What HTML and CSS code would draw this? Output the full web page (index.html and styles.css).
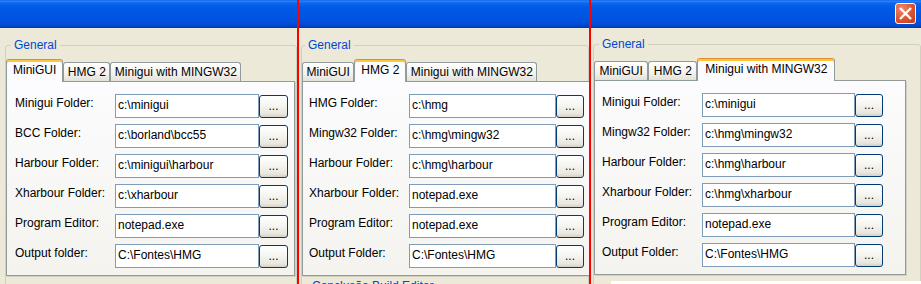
FILE: index.html
```html
<!DOCTYPE html>
<html lang="en">
<head>
    <meta charset="UTF-8">
    <title>Paths</title>
    <link rel="stylesheet" href="styles.css">
</head>
<body>
    <div class="shot">
        <div class="win win-a">
            <div class="titlebar"></div>
            <fieldset class="group">
                <legend>General</legend>
                <div class="tabs">
                    <span class="tab active">MiniGUI</span>
                    <span class="tab">HMG 2</span>
                    <span class="tab">Minigui with MINGW32</span>
                </div>
                <div class="page">
                    <div class="row"><span class="label">Minigui Folder:</span><span class="field">c:\minigui</span><span class="btn">...</span></div>
                    <div class="row"><span class="label">BCC Folder:</span><span class="field">c:\borland\bcc55</span><span class="btn">...</span></div>
                    <div class="row"><span class="label">Harbour Folder:</span><span class="field">c:\minigui\harbour</span><span class="btn">...</span></div>
                    <div class="row"><span class="label">Xharbour Folder:</span><span class="field">c:\xharbour</span><span class="btn">...</span></div>
                    <div class="row"><span class="label">Program Editor:</span><span class="field">notepad.exe</span><span class="btn">...</span></div>
                    <div class="row"><span class="label">Output folder:</span><span class="field">C:\Fontes\HMG</span><span class="btn">...</span></div>
                </div>
            </fieldset>
        </div>
        <div class="cut"></div>
        <div class="win win-b">
            <div class="titlebar"></div>
            <fieldset class="group">
                <legend>General</legend>
                <div class="tabs">
                    <span class="tab">MiniGUI</span>
                    <span class="tab active">HMG 2</span>
                    <span class="tab">Minigui with MINGW32</span>
                </div>
                <div class="page">
                    <div class="row"><span class="label">HMG Folder:</span><span class="field">c:\hmg</span><span class="btn">...</span></div>
                    <div class="row"><span class="label">Mingw32 Folder:</span><span class="field">c:\hmg\mingw32</span><span class="btn">...</span></div>
                    <div class="row"><span class="label">Harbour Folder:</span><span class="field">c:\hmg\harbour</span><span class="btn">...</span></div>
                    <div class="row"><span class="label">Xharbour Folder:</span><span class="field">notepad.exe</span><span class="btn">...</span></div>
                    <div class="row"><span class="label">Program Editor:</span><span class="field">notepad.exe</span><span class="btn">...</span></div>
                    <div class="row"><span class="label">Output Folder:</span><span class="field">C:\Fontes\HMG</span><span class="btn">...</span></div>
                </div>
                <div class="next">Conclusão Build Editor</div>
            </fieldset>
        </div>
        <div class="cut"></div>
        <div class="win win-c">
            <div class="titlebar">
                <span class="close">
                    <svg width="19" height="19" viewBox="0 0 19 19"><path d="M4 4L15 15M15 4L4 15" stroke="#fff" stroke-width="2.4" fill="none"/></svg>
                </span>
            </div>
            <fieldset class="group">
                <legend>General</legend>
                <div class="tabs">
                    <span class="tab">MiniGUI</span>
                    <span class="tab">HMG 2</span>
                    <span class="tab active">Minigui with MINGW32</span>
                </div>
                <div class="page">
                    <div class="row"><span class="label">Minigui Folder:</span><span class="field">c:\minigui</span><span class="btn">...</span></div>
                    <div class="row"><span class="label">Mingw32 Folder:</span><span class="field">c:\hmg\mingw32</span><span class="btn">...</span></div>
                    <div class="row"><span class="label">Harbour Folder:</span><span class="field">c:\hmg\harbour</span><span class="btn">...</span></div>
                    <div class="row"><span class="label">Xharbour Folder:</span><span class="field">c:\hmg\xharbour</span><span class="btn">...</span></div>
                    <div class="row"><span class="label">Program Editor:</span><span class="field">notepad.exe</span><span class="btn">...</span></div>
                    <div class="row"><span class="label">Output Folder:</span><span class="field">C:\Fontes\HMG</span><span class="btn">...</span></div>
                </div>
                <div class="blank"></div>
            </fieldset>
        </div>
    </div>
</body>
</html>
```

FILE: styles.css
```css
*{
    box-sizing: border-box;
}
body{
    margin: 0;
    background: #ece9d8;
    font: 12px/14px "Liberation Sans", Arial, sans-serif;
    color: #000;
}
.shot{
    display: flex;
    width: 921px;
    height: 284px;
    overflow: hidden;
}
.win{
    flex: none;
    height: 284px;
    overflow: hidden;
}
.win-a{ width: 297px; }
.win-b{ width: 290px; }
.win-c{ width: 330px; }
.cut{
    flex: none;
    width: 2px;
    background: #ff0000;
}

/* xp title bar */
.titlebar{
    height: 28px;
    display: flex;
    justify-content: flex-end;
    align-items: flex-start;
    padding: 3px 5px 0 0;
    background: linear-gradient(#0a5ee6 0, #2f86f6 1px, #0d66ee 3px, #0059e8 8px, #0055e3 17px, #004ed9 24px, #003fbe 27px, #00339c 28px);
}
.close{
    width: 21px;
    height: 21px;
    border: 1px solid #fff;
    border-radius: 3px;
    background: radial-gradient(circle at 30% 25%, #ee8a6c, #db5230 55%, #c23c17);
}
.close svg{ display: block; }

/* group box */
.group{
    margin: 10px 0 0 5px;
    padding: 7px 1px 30px 0;
    min-width: 0;
    border: 1px solid #d0d0bf;
    border-radius: 3px;
}
.group legend{
    margin-left: 5px;
    padding: 0 3px;
    color: #0046d5;
    line-height: 14px;
}
.win-b .group{ margin-left: 2px; }
.win-b .group legend{ margin-left: 3px; }
.win-c .group{ margin: 9px 0 0 2px; }

/* tabs */
.tabs{
    display: flex;
    align-items: flex-end;
    height: 22px;
}
.tab{
    flex: none;
    height: 19px;
    padding: 2px 3.5px 0;
    border: 1px solid #919b9c;
    border-bottom: 0;
    border-radius: 3px 3px 0 0;
    background: linear-gradient(#fff, #f4f3ef 55%, #e3e1d8);
    white-space: nowrap;
}
.tab.active{
    position: relative;
    z-index: 1;
    height: 23px;
    margin-bottom: -1px;
    padding: 3px 6px 0;
    border-top-color: #e68b2c;
    background: #fcfcfe;
    box-shadow: inset 0 2px 0 #ffc83c;
}
.win-c .tab{ padding-left: 4.5px; padding-right: 4.5px; }
.win-c .tab.active{ padding-left: 7px; padding-right: 7px; }

/* tab page */
.page{
    width: 289px;
    padding: 12px 0 7px 8px;
    border: 1px solid #919b9c;
    background: linear-gradient(#fcfcfe, #f4f3ee);
    box-shadow: 1px 1px 0 #d2d0c4;
}
.win-b .page{ width: 300px; padding-left: 6px; }
.win-c .page{ width: 312px; padding-left: 7px; }

.row{
    display: flex;
    height: 24px;
    margin-bottom: 6px;
}
.row:last-child{ margin-bottom: 0; }
.label{
    flex: none;
    width: 100px;
    padding-top: 2px;
    white-space: nowrap;
}
.field{
    flex: none;
    width: 144px;
    height: 24px;
    padding: 0 2px;
    border: 1px solid #7f9db9;
    background: #fff;
    line-height: 20px;
    white-space: nowrap;
    overflow: hidden;
}
.btn{
    flex: none;
    width: 29px;
    height: 23px;
    margin-top: 1px;
    border: 1px solid #003c74;
    border-radius: 3px;
    background: linear-gradient(#fff, #f6f5f1 45%, #e8e6de 85%, #d6d0c5);
    text-align: center;
    line-height: 21px;
}
.win-b .field{ width: 147px; }
.win-b .btn{ width: 28px; }
.win-c .field{ width: 153px; }
.win-c .btn{ width: 28px; }

.next{
    margin: 3px 0 0 10px;
    color: #0046d5;
}
.blank{
    width: 310px;
    height: 20px;
    margin: 6px 0 0 17px;
    background: #fff;
}
```
